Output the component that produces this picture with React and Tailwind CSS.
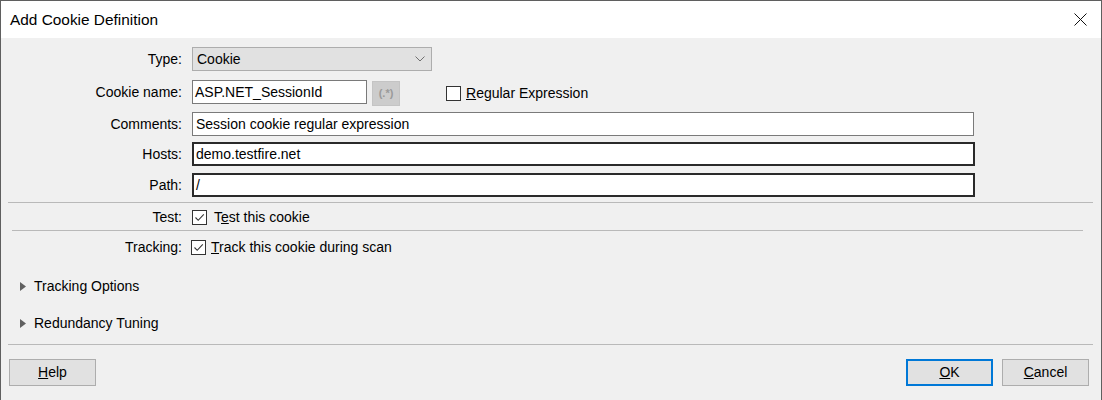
import React from "react";

// Windows-style "Add Cookie Definition" dialog
function Check({ checked }) {
  return (
    <span className="flex h-[15px] w-[15px] shrink-0 items-center justify-center border border-[#333333] bg-white">
      {checked && (
        <svg width="13" height="13" viewBox="0 0 13 13">
          <path d="M2.5 6.5 L5.2 9.3 L10.8 3.4" fill="none" stroke="#333" strokeWidth="1.1" />
        </svg>
      )}
    </span>
  );
}

function Row({ label, className = "", children }) {
  return (
    <div className={`flex items-center ${className}`}>
      <div className="w-[181px] shrink-0 text-right">{label}</div>
      <div className="ml-[10px] flex items-center">{children}</div>
    </div>
  );
}

function Expander({ text, className = "" }) {
  return (
    <div className={`flex h-[20px] items-center pl-[19px] ${className}`}>
      <svg width="6" height="9" viewBox="0 0 6 9">
        <path d="M0 0 L6 4.5 L0 9 Z" fill="#606060" />
      </svg>
      <span className="ml-[8px]">{text}</span>
    </div>
  );
}

function Btn({ children, primary, className = "" }) {
  return (
    <button
      className={`flex h-[27px] w-[87px] items-center justify-center bg-[#e1e1e1] ${
        primary ? "border-2 border-[#0078d7]" : "border border-[#adadad]"
      } ${className}`}
    >
      {children}
    </button>
  );
}

export default function App() {
  return (
    <div className="flex h-[400px] w-[1102px] flex-col overflow-hidden border-x border-t border-[#5f5f5f] bg-[#f0f0f0] font-['Liberation_Sans',Arial,sans-serif] text-[14px] text-black">
      <div className="flex h-[37px] shrink-0 items-center justify-between bg-white pl-[9px] pr-[14px]">
        <span className="mt-px text-[15.4px]">Add Cookie Definition</span>
        <svg width="13" height="13" viewBox="0 0 13 13">
          <path d="M0.5 0.5 L12.5 12.5 M12.5 0.5 L0.5 12.5" stroke="#111" strokeWidth="1" />
        </svg>
      </div>

      <Row label="Type:" className="mt-[9px] h-[24px]">
        <div className="flex h-[24px] w-[240px] items-center justify-between border border-[#adadad] bg-[#e1e1e1] pl-[4px] pr-[6px]">
          <span>Cookie</span>
          <svg width="10" height="6" viewBox="0 0 10 6">
            <path d="M0.5 0.5 L5 5 L9.5 0.5" fill="none" stroke="#707070" strokeWidth="1" />
          </svg>
        </div>
      </Row>

      <Row label="Cookie name:" className="mt-[9px] h-[24px]">
        <div className="flex h-[24px] w-[175px] items-center border border-[#7a7a7a] bg-white pl-[2px]">
          ASP.NET_SessionId
        </div>
        <div className="ml-[5px] mt-[2px] flex h-[25px] w-[28px] items-center justify-center border border-[#c4c4c4] bg-[#cccccc] text-[11px] font-bold text-[#9a9a9a]">
          (.*)
        </div>
        <div className="ml-[46px] mt-[2px] flex items-center">
          <Check />
          <span className="ml-[5px]">
            <span className="underline">R</span>egular Expression
          </span>
        </div>
      </Row>

      <Row label="Comments:" className="mt-[8px] h-[24px]">
        <div className="flex h-[24px] w-[782px] items-center border border-[#7a7a7a] bg-white pl-[3px]">
          Session cookie regular expression
        </div>
      </Row>

      <Row label="Hosts:" className="mt-[6px] h-[24px]">
        <div className="flex h-[24px] w-[783px] items-center border-2 border-[#2a2a2a] bg-white pl-[2px]">
          demo.testfire.net
        </div>
      </Row>

      <Row label="Path:" className="mt-[7px] h-[24px]">
        <div className="flex h-[24px] w-[783px] items-center border-2 border-[#2a2a2a] bg-white pl-[2px]">
          /
        </div>
      </Row>

      <div className="ml-[7px] mr-[8px] mt-[5px] h-px shrink-0 bg-[#b9b9b9]" />

      <Row label="Test:" className="h-[27px] pt-px">
        <Check checked />
        <span className="ml-[7px]">
          T<span className="underline">e</span>st this cookie
        </span>
      </Row>

      <div className="ml-[11px] mr-[18px] h-px shrink-0 bg-[#b9b9b9]" />

      <Row label="Tracking:" className="h-[31px] pt-px">
        <span className="-ml-px flex">
          <Check checked />
        </span>
        <span className="ml-[5px]">
          <span className="underline">T</span>rack this cookie during scan
        </span>
      </Row>

      <Expander text="Tracking Options" className="mt-[14px]" />
      <Expander text="Redundancy Tuning" className="mt-[17px]" />

      <div className="ml-[7px] mr-[8px] mt-[11px] h-px shrink-0 bg-[#b9b9b9]" />

      <div className="mt-[14px] flex items-center">
        <Btn className="ml-[8px]">
          <span>
            <span className="underline">H</span>elp
          </span>
        </Btn>
        <div className="flex-1" />
        <Btn primary>
          <span>
            <span className="underline">O</span>K
          </span>
        </Btn>
        <Btn className="ml-[9px] mr-[12px]">
          <span>
            <span className="underline">C</span>ancel
          </span>
        </Btn>
      </div>
    </div>
  );
}
